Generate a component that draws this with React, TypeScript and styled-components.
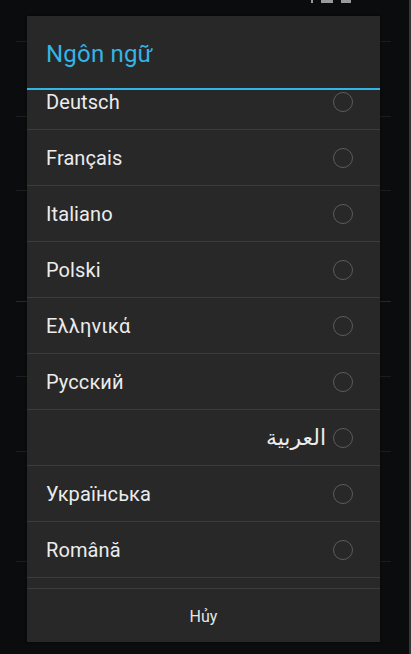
import React from 'react';
import styled, { createGlobalStyle } from 'styled-components';

const GlobalStyle = createGlobalStyle`
	html, body {
		margin: 0;
		padding: 0;
		background: #0b0c0e;
	}
	* {
		box-sizing: border-box;
	}
`;

const Screen = styled.div`
	position: relative;
	width: 411px;
	height: 654px;
	overflow: hidden;
	background: #0b0c0e;
	font-family: 'Roboto', 'DejaVu Sans', sans-serif;
	border-right: 2px solid #34363a;
`;

const StatusBar = styled.div`
	height: 6px;
	display: flex;
	justify-content: flex-end;
	align-items: flex-start;
	gap: 8px;
	padding-right: 58px;
`;

const StatusIcon = styled.span<{ $w: number }>`
	display: block;
	width: ${({ $w }) => $w}px;
	height: 3px;
	background: #9a9a9a;
`;

const BackList = styled.div`
	display: flex;
	flex-direction: column;
	padding: 0 18px 0 16px;
`;

const BackRow = styled.div<{ $h: number; $bright?: boolean }>`
	height: ${({ $h }) => $h}px;
	border-bottom: 1px solid ${({ $bright }) => ($bright ? '#26282b' : '#1c1d20')};
`;

const Dialog = styled.div`
	position: absolute;
	left: 27px;
	top: 16px;
	width: 353px;
	height: 626px;
	background: #282828;
	display: flex;
	flex-direction: column;
	box-shadow: 0 0 2px rgba(0, 0, 0, 0.6);
`;

const TitleBar = styled.div`
	height: 74px;
	display: flex;
	align-items: center;
	padding: 3px 19px 0;
	border-bottom: 2px solid #33b5e5;
`;

const Title = styled.h1`
	margin: 0;
	font-size: 24px;
	font-weight: 400;
	color: #33b5e5;
	letter-spacing: 0.2px;
`;

const ListViewport = styled.div`
	flex: 1;
	overflow: hidden;
	border-bottom: 1px solid #3c3c3c;
`;

const List = styled.div`
	margin-top: -16px;
	display: flex;
	flex-direction: column;
`;

const Row = styled.div<{ $rtl?: boolean }>`
	height: 56px;
	display: flex;
	align-items: center;
	justify-content: ${({ $rtl }) => ($rtl ? 'flex-end' : 'space-between')};
	gap: 7px;
	padding: 0 27px 0 19px;
	border-bottom: 1px solid #3c3c3c;
`;

const Label = styled.span<{ $rtl?: boolean }>`
	font-size: ${({ $rtl }) => ($rtl ? '22px' : '20px')};
	color: #ececec;
	letter-spacing: 0.1px;
`;

const Radio = styled.span`
	width: 20px;
	height: 20px;
	border-radius: 50%;
	border: 1.5px solid #5c5c5c;
	flex-shrink: 0;
`;

const ButtonBar = styled.div`
	height: 53px;
	display: flex;
	align-items: center;
	justify-content: center;
`;

const CancelButton = styled.button`
	background: none;
	border: none;
	padding: 0;
	font-family: inherit;
	font-size: 16px;
	color: #e6e6e6;
	margin-top: 2px;
`;

const languages: { name: string; rtl?: boolean }[] = [
	{ name: 'Deutsch' },
	{ name: 'Français' },
	{ name: 'Italiano' },
	{ name: 'Polski' },
	{ name: 'Ελληνικά' },
	{ name: 'Русский' },
	{ name: 'العربية', rtl: true },
	{ name: 'Українська' },
	{ name: 'Română' },
	{ name: '' },
];

const backRows = [
	{ h: 36 },
	{ h: 75 },
	{ h: 74 },
	{ h: 111, bright: true },
	{ h: 75 },
	{ h: 75 },
	{ h: 110 },
];

const App = () => {
	return (
		<>
			<GlobalStyle />
			<Screen>
				<StatusBar>
					<StatusIcon $w={2} />
					<StatusIcon $w={12} />
					<StatusIcon $w={10} />
				</StatusBar>
				<BackList>
					{backRows.map((r, i) => (
						<BackRow key={i} $h={r.h} $bright={r.bright} />
					))}
				</BackList>
				<Dialog>
					<TitleBar>
						<Title>Ngôn ngữ</Title>
					</TitleBar>
					<ListViewport>
						<List>
							{languages.map((lang, i) => (
								<Row key={i} $rtl={lang.rtl}>
									<Label $rtl={lang.rtl} dir={lang.rtl ? 'rtl' : undefined}>
										{lang.name}
									</Label>
									<Radio />
								</Row>
							))}
						</List>
					</ListViewport>
					<ButtonBar>
						<CancelButton>Hủy</CancelButton>
					</ButtonBar>
				</Dialog>
			</Screen>
		</>
	);
};

export default App;
